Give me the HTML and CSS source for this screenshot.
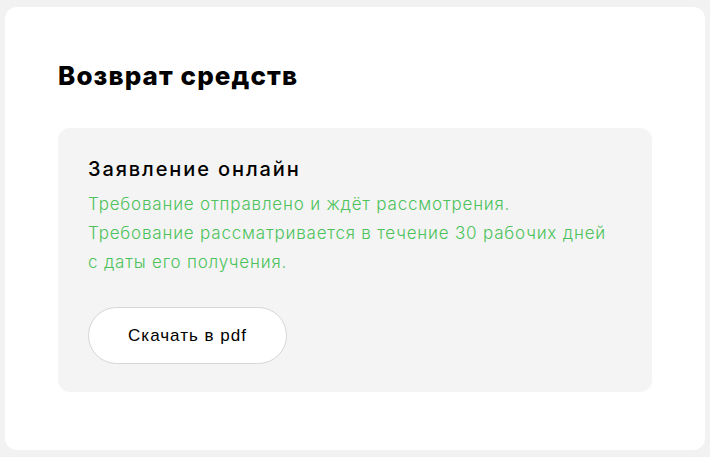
FILE: index.html
```html
<!DOCTYPE html>
<html lang="ru">
<head>
<meta charset="utf-8">
<link rel="stylesheet" href="styles.css">
</head>
<body>
<div class="card">
  <h1 class="title">Возврат средств</h1>
  <div class="box">
    <h2 class="box-title">Заявление онлайн</h2>
    <p class="status">Требование отправлено и ждёт рассмотрения.<br>Требование рассматривается в течение 30 рабочих дней<br>с даты его получения.</p>
    <button class="btn">Скачать в pdf</button>
  </div>
</div>
</body>
</html>
```
FILE: styles.css
```css
html, body {
  margin: 0;
  padding: 0;
  background: #f2f2f2;
}
body {
  padding: 7px 5px 7px 5px;
  font-family: "Inter", "Noto Sans", sans-serif;
}
.card {
  background: #ffffff;
  border-radius: 12px;
  height: 443px;
  box-sizing: border-box;
  padding: 53px 53px 0 53px;
}
.title {
  margin: 0;
  font-family: "Inter", sans-serif;
  font-weight: 800;
  font-size: 26px;
  line-height: 32px;
  letter-spacing: 1.1px;
  color: #000;
}
.box {
  margin-top: 36px;
  background: #f4f4f4;
  border-radius: 12px;
  height: 264px;
  box-sizing: border-box;
  padding: 27px 30px 0 30px;
}
.box-title {
  margin: 0;
  font-family: "Inter", sans-serif;
  font-weight: 500;
  font-size: 20px;
  line-height: 28px;
  letter-spacing: 1.9px;
  color: #000;
}
.status {
  margin: 7px 0 0 0;
  font-family: "Inter", sans-serif;
  font-weight: 300;
  font-size: 17px;
  line-height: 29px;
  letter-spacing: 0.8px;
  color: #4cc25b;
}
.btn {
  margin-top: 30px;
  width: 199px;
  height: 57px;
  border: 1px solid #d6d6d6;
  border-radius: 29px;
  background: #fff;
  font-family: "Liberation Sans", Arial, sans-serif;
  font-size: 17px;
  letter-spacing: 1px;
  color: #000;
  cursor: pointer;
}
```
